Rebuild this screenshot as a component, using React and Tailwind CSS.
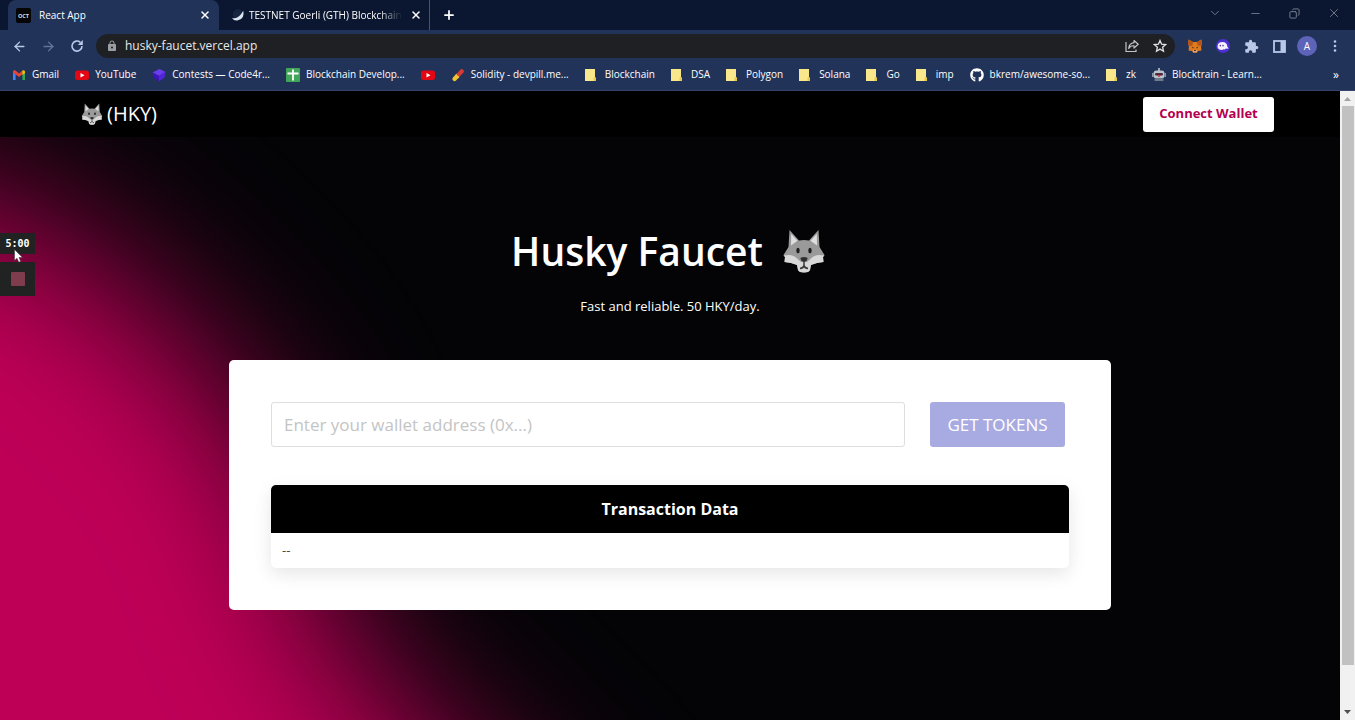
import React from "react";
import { MdExtension, MdLock } from "react-icons/md";
import { FaGithub } from "react-icons/fa";
import { ArrowLeft, ArrowRight, ChevronDown, Copy, Minus, Plus, X } from "lucide-react";

function Wolf({ className }) {
  return (
    <svg viewBox="0 0 42 44" className={className} aria-hidden="true">
      <path d="M6.500 1 16 11.500Q21 10.500 26 11.500L35.500 1 36.500 18 41.500 26 40 28 40.500 33 34 34 28 36 27 41Q26 43.500 21 43.500 16 43.500 15 41L14 36 8 34 1.500 33 2 28 .5 26 5.500 18Z" fill="#9a9a9a" />
      <path d="M8.200 5 14.500 11.800 8 16.500ZM33.800 5 27.500 11.800 34 16.500Z" fill="#dedede" />
      <path d="M.5 26.500Q10 24.500 14 29.500L18 33H24L28 29.500Q32 24.500 41.500 26.500L40 28 40.500 33 34 34 28 36 27 41Q26 43.500 21 43.500 16 43.500 15 41L14 36 8 34 1.500 33 2 28Z" fill="#d8d8d8" />
      <ellipse cx="15" cy="21.500" rx="1.700" ry="2.700" fill="#1c1c1c" />
      <ellipse cx="27" cy="21.500" rx="1.700" ry="2.700" fill="#1c1c1c" />
      <path d="M17.500 29.500Q17.500 28 21 28T24.500 29.500Q24 32.500 21 33 18 32.500 17.500 29.500Z" fill="#2e2e2e" />
      <path d="M21 33V36.500M17 39.500Q20.500 39 21 36.500 21.500 39 25 39.500" stroke="#3a3a3a" strokeWidth="1.500" fill="none" />
    </svg>
  );
}

const icons = {
  gmail: (
    <svg viewBox="0 0 14 14" className="size-[14px]">
      <path d="M1 12V3h2.600v9Z" fill="#4285f4" />
      <path d="M10.400 12V3H13v9Z" fill="#34a853" />
      <path d="M1 4.500V3.500Q1.500 1.500 3.500 2.500L7 5.500 10.500 2.500V6.200L7 9 3.500 6.200Z" fill="#ea4335" />
      <path d="M10.400 2.600Q12.800 1.500 13 3.800V5L10.400 7Z" fill="#fbbc04" />
    </svg>
  ),
  youtube: (
    <svg viewBox="0 0 14 14" className="size-[14px]">
      <rect x="0" y="2.500" width="14" height="9.500" rx="2.500" fill="#e30613" />
      <path d="M5.500 5v4.500l4-2.250Z" fill="#fff" />
    </svg>
  ),
  code4: (
    <svg viewBox="0 0 14 14" className="size-[14px]">
      <path d="M7.500 1 13.500 4 7 8 0.500 4.500Z" fill="#6a3cf0" />
      <path d="M0.500 4.500 7 8V13.500L1.500 9.500Z" fill="#3f14b8" />
      <path d="M7 8 13.500 4 12.500 9.500 7 13.500Z" fill="#5226d8" />
    </svg>
  ),
  sheet: (
    <svg viewBox="0 0 14 14" className="size-[14px]">
      <rect width="14" height="14" rx="1" fill="#3fa757" />
      <path d="M7 1.500V12.500M1.500 5.500H12.500" stroke="#fff" strokeWidth="1.800" />
    </svg>
  ),
  pill: (
    <svg viewBox="0 0 14 14" className="size-[14px]">
      <path d="M3.500 11 6.500 7.800" stroke="#f4c430" strokeWidth="4.200" strokeLinecap="round" />
      <path d="M7.800 6.400 10.800 3.200" stroke="#d63a34" strokeWidth="4.200" strokeLinecap="round" />
      <path d="M5.200 6.200 8.400 9.200 7 10.600 3.900 7.600Z" fill="#f4c430" />
    </svg>
  ),
  folder: (
    <svg viewBox="0 0 14 14" className="size-[14px]">
      <path d="M0 1H10V9L11 10V13H0Z" fill="#f8e88b" />
      <path d="M8.500 13V10.500L9.800 8.500 11 10.500V13Z" fill="#e8c94a" />
    </svg>
  ),
  github: <FaGithub className="size-[14px]" />,
  robot: (
    <svg viewBox="0 0 14 14" className="size-[14px]">
      <path d="M6 0h2v3H6Z" fill="#9aa7b5" />
      <rect x="1.500" y="2.500" width="11" height="8" rx="3" fill="#b9c4cd" />
      <path d="M0 5h1.500v4H0ZM12.500 5H14v4h-1.500Z" fill="#8d9aa8" />
      <rect x="3" y="5" width="8" height="2.600" rx="1.300" fill="#4d2a3a" />
      <path d="M5 7H9L7 9.500Z" fill="#c23a50" />
      <path d="M2.500 10.500h9V13h-9Z" fill="#6d7b8b" />
    </svg>
  ),
};

const bookmarks = [
  ["gmail", "Gmail"],
  ["youtube", "YouTube"],
  ["code4", "Contests — Code4r..."],
  ["sheet", "Blockchain Develop..."],
  ["youtube", ""],
  ["pill", "Solidity - devpill.me..."],
  ["folder", "Blockchain"],
  ["folder", "DSA"],
  ["folder", "Polygon"],
  ["folder", "Solana"],
  ["folder", "Go"],
  ["folder", "imp"],
  ["github", "bkrem/awesome-so..."],
  ["folder", "zk"],
  ["robot", "Blocktrain - Learn..."],
];

function TabStrip() {
  return (
    <div className="flex h-[30px] items-stretch bg-[#0b1731] pl-2 text-[10px]">
      <div className="flex w-[211px] items-center rounded-t-lg bg-[#22335a] px-2">
        <svg viewBox="0 0 15 15" className="size-[15px]" aria-hidden="true">
          <rect width="15" height="15" rx="2" fill="#050505" />
          <text x="7.500" y="9.500" textAnchor="middle" fontSize="5.500" fontWeight="700" fill="#ddd">OCT</text>
        </svg>
        <span className="ml-2 flex-1">React App</span>
        <button aria-label="Close React App" className="flex size-3 items-center justify-center">
          <X className="size-3" strokeWidth={3} />
        </button>
      </div>
      <div className="flex w-[211px] items-center border-r border-[#47536b] px-2">
        <svg viewBox="0 0 16 16" className="ml-1 size-[14px] shrink-0" aria-hidden="true">
          <circle cx="8" cy="7" r="6" fill="#172442" />
          <path d="M14 3Q16 12 8 14 3 15 1 11 8 14 14 3Z" fill="#dce4f2" />
        </svg>
        <span className="ml-1 flex-1 whitespace-nowrap [mask-image:linear-gradient(to_right,black_85%,transparent)]">
          TESTNET Goerli (GTH) Blockchain
        </span>
        <button aria-label="Close TESTNET Goerli" className="ml-2 flex size-3 items-center justify-center">
          <X className="size-3" strokeWidth={3} />
        </button>
      </div>
      <button aria-label="New tab" className="ml-3 flex items-center">
        <Plus className="size-[14px]" strokeWidth={3} />
      </button>
      <div className="ml-auto flex items-center gap-[27px] pr-[14px] pb-1 text-[#7b8394]">
        <button aria-label="Search tabs"><ChevronDown className="size-[14px]" strokeWidth={1.5} /></button>
        <button aria-label="Minimize"><Minus className="size-[13px]" strokeWidth={1.5} /></button>
        <button aria-label="Restore"><Copy className="size-[11px] -scale-x-100" strokeWidth={2} /></button>
        <button aria-label="Close window"><X className="size-[14px]" strokeWidth={1.5} /></button>
      </div>
    </div>
  );
}

function Toolbar() {
  return (
    <div className="flex h-8 items-center bg-[#22335a] text-[#b9c8e8]">
      <div className="flex w-24 items-center gap-[14px] pl-3">
        <button aria-label="Back"><ArrowLeft className="size-[15px]" strokeWidth={2.2} /></button>
        <button aria-label="Forward" className="text-[#63739a]"><ArrowRight className="size-[15px]" strokeWidth={2.2} /></button>
        <button aria-label="Reload">
          <svg viewBox="0 0 14 14" className="size-[14px]">
            <path d="M12 7A5 5 0 1 1 10.300 3.300" fill="none" stroke="currentColor" strokeWidth="1.600" />
            <path d="M12.800 1V6H7.800Z" fill="currentColor" />
          </svg>
        </button>
      </div>
      <div className="flex h-6 flex-1 items-center rounded-full bg-[#1f2023] pr-2 pl-[10px]">
        <MdLock className="size-3 text-[#9a9da2]" aria-hidden="true" />
        <input
          aria-label="Address"
          defaultValue="husky-faucet.vercel.app"
          className="ml-[7px] min-w-0 flex-1 bg-transparent text-[12px] text-[#e6e8ec] outline-none"
        />
        <button aria-label="Share" className="mr-[14px] text-[#c3c4c7]">
          <svg viewBox="0 0 14 14" className="size-[14px]" fill="none" stroke="currentColor" strokeWidth="1.200">
            <path d="M1 3V12.500H11V10.500" />
            <path d="M9 1.500 13.200 5.300 9 9V6.800Q5.500 6.500 3.700 9.500 4.200 4.300 9 3.700Z" strokeLinejoin="round" />
          </svg>
        </button>
        <button aria-label="Bookmark this tab" className="text-[#dfe0e2]">
          <svg viewBox="0 0 14 14" className="size-[14px]" fill="none" stroke="currentColor" strokeWidth="1.300">
            <path d="M7 1.500 8.600 5.200 12.600 5.600 9.600 8.200 10.500 12.200 7 10.100 3.500 12.200 4.400 8.200 1.400 5.600 5.400 5.200Z" />
          </svg>
        </button>
      </div>
      <div className="flex items-center gap-2 px-[10px]">
        <button aria-label="Fox wallet" className="flex w-5 justify-center">
          <svg viewBox="0 0 14 14" className="size-[14px]">
            <path d="M.5.5 5 3H9L13.500.5 13.800 5 13 8 13.500 11.500 10 12 8.800 13.800H5.200L4 12 .5 11.500 1 8 .2 5Z" fill="#e07a1c" />
            <path d="M.5.5 5 3 4.500 6.500 1 7 .2 5ZM13.500.5 9 3 9.500 6.500 13 7 13.800 5Z" fill="#b4561a" />
            <path d="M3.500 7.500 6 8.700 5 9.600ZM10.500 7.500 8 8.700 9 9.600Z" fill="#232d3a" />
            <path d="M5.200 11.300H8.800L8.500 13.200H5.500Z" fill="#d9c4b2" />
            <path d="M6 11H8L7.600 12.200H6.400Z" fill="#2b2420" />
          </svg>
        </button>
        <button aria-label="Ghost wallet" className="flex w-5 justify-center">
          <svg viewBox="0 0 14 14" className="size-[14px]">
            <circle cx="7" cy="7" r="7" fill="#4b2fd0" />
            <path d="M1.500 7.200Q2 3 6.500 3 11 3 11.300 7.500L12.700 9.700 9.800 9.600 9 10.600 7.800 10.200 6 11Q1.500 11 1.500 7.200Z" fill="#f4f0ff" />
            <ellipse cx="4.300" cy="6.600" rx=".7" ry=".9" fill="#3c2799" />
            <ellipse cx="7" cy="6.600" rx=".7" ry=".9" fill="#3c2799" />
          </svg>
        </button>
        <button aria-label="Extensions" className="flex w-5 justify-center"><MdExtension className="size-[15px]" /></button>
        <button aria-label="Side panel" className="flex w-5 justify-center">
          <svg viewBox="0 0 13 13" className="size-[13px]">
            <rect x="1" y="1" width="11" height="11" fill="none" stroke="currentColor" strokeWidth="1.800" />
            <path d="M7.500 1H12V12H7.500Z" fill="currentColor" />
          </svg>
        </button>
        <button aria-label="Profile" className="flex size-5 items-center justify-center rounded-full bg-[#5c63b8] text-[10px] text-white">A</button>
        <button aria-label="Menu" className="flex w-5 justify-center">
          <svg viewBox="0 0 4 14" className="h-[14px] w-1" fill="currentColor">
            <circle cx="2" cy="2.500" r="1.300" /><circle cx="2" cy="7" r="1.300" /><circle cx="2" cy="11.500" r="1.300" />
          </svg>
        </button>
      </div>
    </div>
  );
}

function Bookmarks() {
  return (
    <nav aria-label="Bookmarks" className="flex h-[29px] items-center gap-4 border-b border-[#33456c] bg-[#22335a] pr-4 pb-[3px] pl-3 text-[10px] whitespace-nowrap">
      {bookmarks.map(([icon, label], i) => (
        <a key={i} href="#" aria-label={label || "YouTube video"} className="flex items-center gap-[6px]">
          {icons[icon]}
          {label && <span>{label}</span>}
        </a>
      ))}
      <button aria-label="More bookmarks" className="ml-auto text-[12px] leading-none">»</button>
    </nav>
  );
}

function Glow() {
  return (
    <svg className="absolute inset-0 size-full" viewBox="0 0 1340 583" preserveAspectRatio="none" aria-hidden="true">
      <defs>
        <filter id="soft" x="-50%" y="-50%" width="200%" height="200%" colorInterpolationFilters="sRGB">
          <feGaussianBlur stdDeviation="80" />
        </filter>
      </defs>
      <path
        d="M-400 40 -60 50 30 80 110 135 180 200 240 265 280 330 300 400 325 470 370 540 450 620 550 720 660 900 -400 900Z"
        fill="#be0057"
        filter="url(#soft)"
      />
    </svg>
  );
}

function Faucet() {
  return (
    <main className="relative flex flex-1 flex-col items-center bg-[#040407]">
      <Glow />
      <section className="relative flex w-full flex-1 flex-col items-center px-6 pt-[84px] text-white">
        <h1 className="flex items-center gap-4 text-[39px] leading-[60px] font-semibold">
          Husky Faucet
          <Wolf className="h-[44px] w-[50px]" />
        </h1>
        <p className="mt-3 text-[13px] leading-[26px]">Fast and reliable. 50 HKY/day.</p>
        <div className="mt-[41px] w-full max-w-[882px] rounded-[5px] bg-white p-[42px] text-[#4a4a4a]">
          <form className="flex gap-[25px] pr-1" onSubmit={(e) => e.preventDefault()}>
            <input
              aria-label="Wallet address"
              placeholder="Enter your wallet address (0x...)"
              className="h-[45px] min-w-0 flex-1 rounded-[3px] border border-[#dedede] px-3 text-[17px] outline-none placeholder:text-[#c4c4c4]"
            />
            <button className="h-[45px] w-[135px] rounded-[3px] bg-[#a8abe1] text-[17px] text-white">GET TOKENS</button>
          </form>
          <article className="mt-[38px] overflow-hidden rounded-[5px] bg-white shadow-[0_6px_18px_rgba(0,0,0,0.1)]">
            <h2 className="bg-black py-3 text-center text-[16px] leading-6 font-bold text-white">Transaction Data</h2>
            <p className="px-[11px] py-2 text-[13px] leading-[19px]">--</p>
          </article>
        </div>
      </section>
    </main>
  );
}

function Recorder() {
  return (
    <aside className="absolute top-[233px] left-0 flex w-[35px] flex-col gap-2" aria-label="Recorder">
      <div className="flex h-[21px] items-center justify-center bg-[#202322] font-['DejaVu_Sans_Mono',monospace] text-[10px] font-bold text-white">5:00</div>
      <button aria-label="Stop recording" className="flex h-[34px] items-center justify-center bg-[#202322]">
        <span className="size-[14px] rounded-[1px] bg-[#7e3c4c]" />
      </button>
      <svg viewBox="0 0 9 14" className="absolute top-4 left-[14px] h-[14px] w-[9px]" aria-hidden="true">
        <path d="M.5.5V11.500L3 9.300 4.800 13.200 6.700 12.300 5 8.500H8.500Z" fill="#fff" stroke="#333" strokeWidth=".5" />
      </svg>
    </aside>
  );
}

function Scrollbar() {
  return (
    <div className="flex w-[15px] flex-col items-center bg-[#f1f1f1]" aria-hidden="true">
      <svg viewBox="0 0 15 15" className="size-[15px]"><path d="M4 10 7.500 6 11 10Z" fill="#a3a3a3" /></svg>
      <div className="w-3 flex-[560] bg-[#c1c1c1]" />
      <div className="flex-[40]" />
      <svg viewBox="0 0 15 15" className="size-[15px]"><path d="M4 5 7.500 9 11 5Z" fill="#505050" /></svg>
    </div>
  );
}

export default function App() {
  return (
    <div className="relative flex min-h-screen flex-col bg-black font-['Open_Sans','Noto_Sans',sans-serif] text-white">
      <header>
        <TabStrip />
        <Toolbar />
        <Bookmarks />
      </header>
      <div className="flex flex-1 items-stretch">
        <div className="flex min-w-0 flex-1 flex-col">
          <nav className="flex h-[46px] items-center justify-between bg-black pr-[66px] pl-[81px]">
            <a href="#" className="flex items-center gap-1 text-[20px]">
              <Wolf className="size-[22px]" />
              (HKY)
            </a>
            <button className="h-[35px] w-[131px] rounded-[3px] bg-white text-[13px] font-bold text-[#b3004f]">Connect Wallet</button>
          </nav>
          <Faucet />
        </div>
        <Scrollbar />
      </div>
      <Recorder />
    </div>
  );
}
